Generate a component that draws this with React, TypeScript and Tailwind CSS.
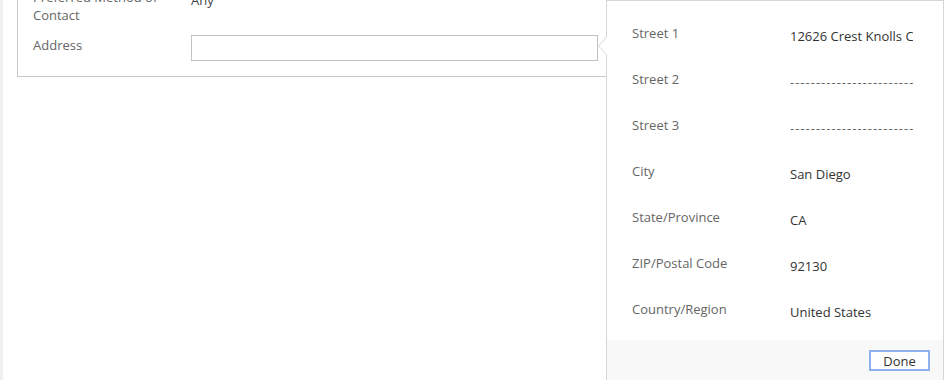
const rows = [
  { label: "Street 1", value: "12626 Crest Knolls Circle" },
  { label: "Street 2", value: null },
  { label: "Street 3", value: null },
  { label: "City", value: "San Diego" },
  { label: "State/Province", value: "CA" },
  { label: "ZIP/Postal Code", value: "92130" },
  { label: "Country/Region", value: "United States" }
];

const dashes = "-".repeat(30);

export default function App() {
  return (
    <main className="relative flex h-[380px] w-[945px] overflow-hidden bg-white font-['Open_Sans',sans-serif] text-[13px]">
      <div className="h-full w-[3px] shrink-0 bg-[#f0f0f0]" />
      <div className="ml-[14px]">
        <div className="-mt-[23px] w-[720px] border border-[#c8c8c8] pb-[15px] pl-[15px] pt-[10px]">
          <div className="flex">
            <div className="w-[158px] leading-[18px] text-[#666666]">
              Preferred Method of
              <br />
              Contact
            </div>
            <div className="pt-[3px] leading-[18px] text-[#444444]">Any</div>
          </div>
          <div className="mt-[11px] flex">
            <div className="w-[158px] leading-[20px] text-[#666666]">Address</div>
            <div className="h-[26px] w-[407px] border border-[#c2c2c2] bg-white" />
          </div>
        </div>
      </div>

      <div className="absolute left-[606px] top-0 h-[400px] w-[338px] border border-[#d6d6d6] bg-white">
        <svg className="absolute -left-[9px] top-[36px]" width="10" height="18" viewBox="0 0 10 18">
          <path d="M9 0 L9 18 Z" stroke="white" strokeWidth="3" />
          <path d="M8.5 0.5 L0.5 9 L8.5 17.5" fill="white" stroke="#d6d6d6" strokeWidth="1" />
        </svg>
        <div className="pt-[9px]">
          {rows.map((row) => (
            <div key={row.label} className="flex h-[46px] items-center pl-[25px]">
              <div className="w-[158px] leading-[20px] text-[#666666]">{row.label}</div>
              <div className="mt-[6px] w-[123px] overflow-hidden whitespace-nowrap leading-[20px] text-[#333333]">
                {row.value ?? <span className="tracking-[1px] text-[#666666]">{dashes}</span>}
              </div>
            </div>
          ))}
        </div>
        <div className="mt-[8px] flex h-[60px] justify-end bg-[#f8f8f8] pr-[13px] pt-[10px]">
          <button className="h-[21px] w-[61px] border-2 border-[#8fb0ee] bg-white text-[13px] leading-[16px] text-[#333333]">
            Done
          </button>
        </div>
      </div>
    </main>
  );
}
